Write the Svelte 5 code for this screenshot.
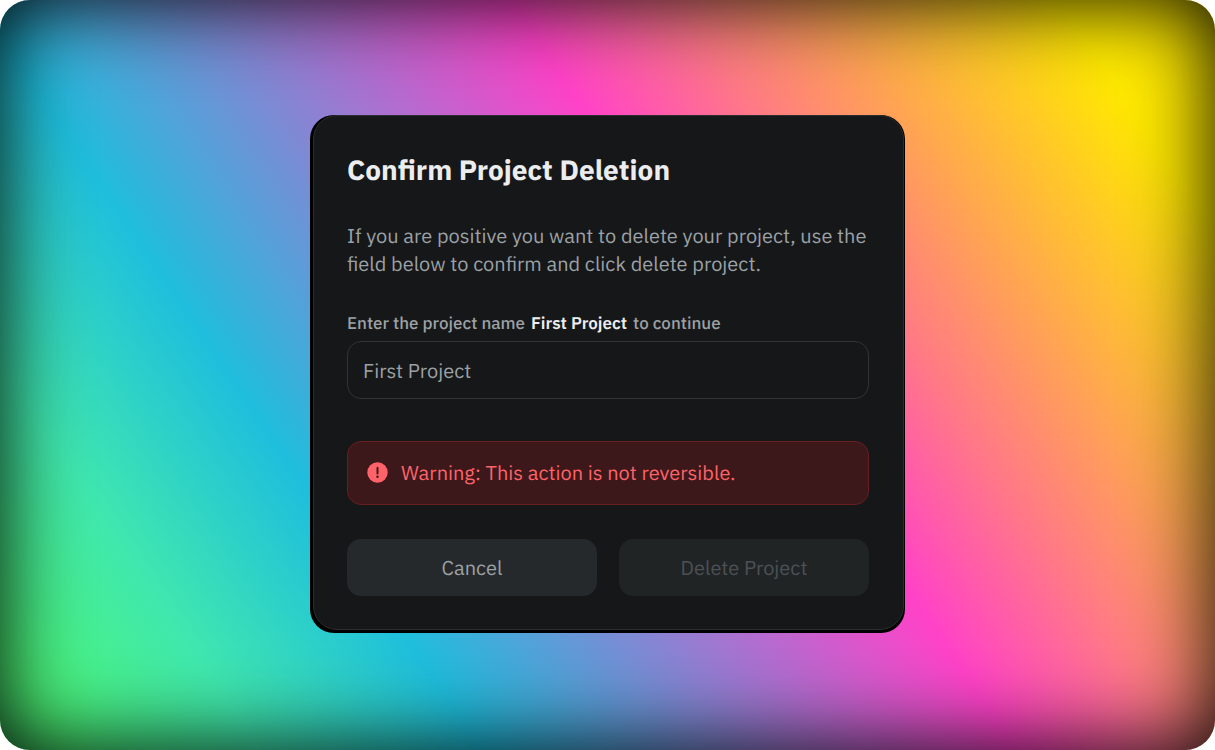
<script>
  const projectName = 'First Project';
  let entered = $state('');
  let matches = $derived(entered === projectName);
</script>

<main class="backdrop">
  <div class="frame">
    <form class="dialog" role="dialog" aria-labelledby="title" onsubmit={(e) => e.preventDefault()}>
      <h1 id="title">Confirm Project Deletion</h1>
      <p class="intro">
        If you are positive you want to delete your project, use the field below to confirm and click delete project.
      </p>
      <label for="name">Enter the project name <strong>{projectName}</strong> to continue</label>
      <input id="name" type="text" placeholder={projectName} autocomplete="off" bind:value={entered} />
      <div class="warning" role="alert">
        <svg width="22" height="22" viewBox="0 0 22 22" aria-hidden="true">
          <circle cx="11.5" cy="10.5" r="10.2" fill="#ff6369" />
          <path d="M11.5 5.8v5.6" stroke="#3c181a" stroke-width="2" stroke-linecap="round" />
          <circle cx="11.5" cy="14.8" r="1.25" fill="#3c181a" />
        </svg>
        <span>Warning: This action is not reversible.</span>
      </div>
      <div class="actions">
        <button type="button" class="cancel">Cancel</button>
        <button type="submit" class="delete" disabled={!matches}>Delete Project</button>
      </div>
    </form>
  </div>
</main>

<style>
  :global(body) {
    margin: 0;
    background: #fff;
  }
  .backdrop {
    box-sizing: border-box;
    min-height: 100vh;
    padding-bottom: 2px;
    display: grid;
    place-items: center;
    border-radius: 30px;
    background: linear-gradient(56deg, #4cf576 4%, #40e8ae 15%, #1fbedd 28%, #ff42c8 59%, #ff7a85 69%, #ffe900 91%);
    box-shadow: inset 0 0 84px #000;
    font-family: "IBM Plex Sans", Roboto, sans-serif;
    font-size: 20px;
    text-rendering: geometricPrecision;
  }
  .frame {
    box-sizing: border-box;
    width: 100%;
    max-width: 595px;
    padding: 0 1px 3px 3px;
    border-radius: 24px;
    background: #000;
  }
  .dialog {
    padding: 36px 34px 33px 33px;
    border: 1px solid #2b2d2f;
    border-radius: 24px;
    background: #161718;
    color: #9ba1a6;
  }
  h1 {
    margin: 0;
    font-size: 28px;
    line-height: 36px;
    font-weight: 700;
    color: #ecedee;
  }
  .intro {
    margin: 34px 0;
    line-height: 28px;
  }
  label {
    display: block;
    margin-bottom: 7px;
    font-size: 17px;
    line-height: 22px;
    font-weight: 500;
  }
  strong {
    margin: 0 2px;
    font-weight: 600;
    color: #ecedee;
  }
  input {
    box-sizing: border-box;
    display: block;
    width: 100%;
    height: 58px;
    padding: 0 15px;
    border: 1px solid #313335;
    border-radius: 14px;
    background: #161718;
    color: #ecedee;
    font: inherit;
    text-rendering: inherit;
  }
  input::placeholder {
    color: #9ba1a6;
    opacity: 1;
  }
  .warning {
    display: flex;
    align-items: center;
    gap: 13px;
    margin: 42px 0 34px;
    padding: 17px 18px;
    border: 1px solid #671e22;
    border-radius: 14px;
    background: #3c181a;
    color: #ff6369;
    line-height: 28px;
  }
  .actions {
    display: grid;
    grid-template-columns: 1fr 1fr;
    gap: 22px;
  }
  button {
    height: 57px;
    padding: 0 16px 1px;
    border: 0;
    border-radius: 14px;
    background: #26292b;
    color: #9ba1a6;
    font: inherit;
    text-rendering: inherit;
  }
  .delete:disabled {
    background: #202425;
    color: #4c5155;
  }
</style>
